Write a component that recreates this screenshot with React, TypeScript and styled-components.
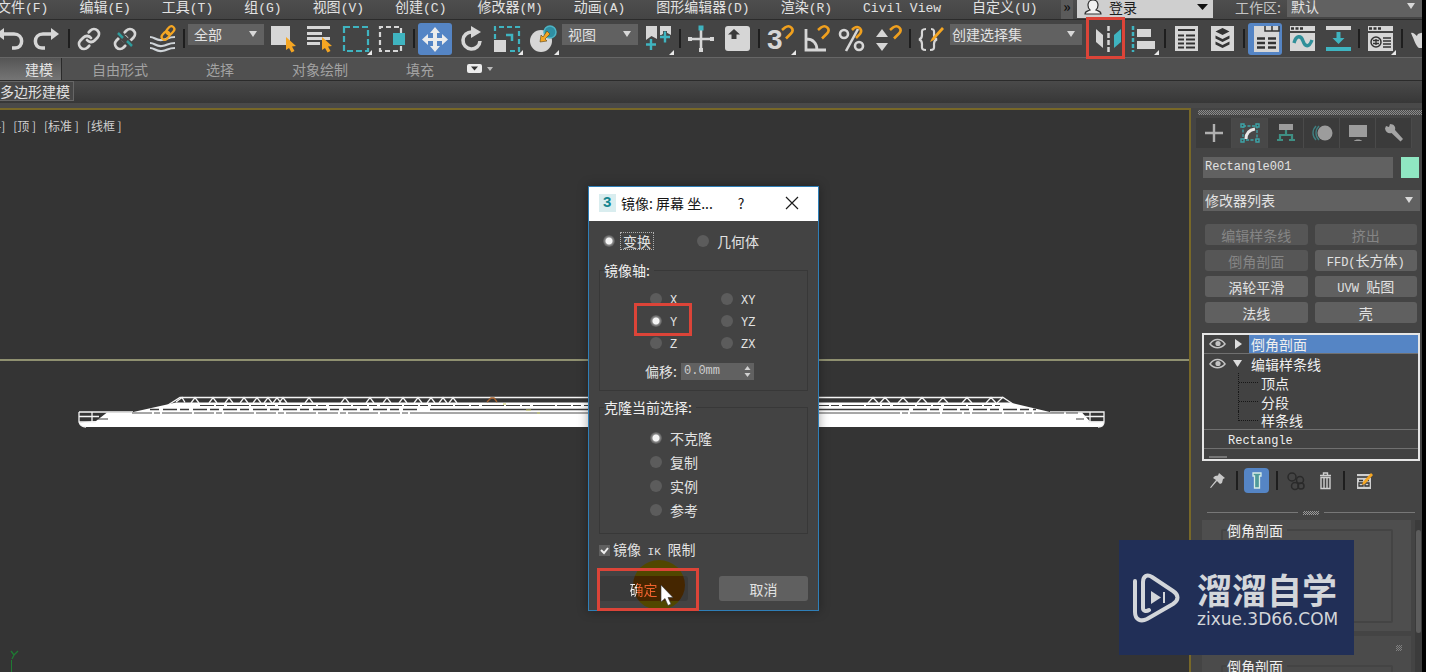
import React from "react";
import styled, { createGlobalStyle, css } from "styled-components";

const CJK = '"Noto Sans CJK SC", sans-serif';
const C = {
  panel: "#444444",
  field: "#616161",
  line: "#2b2b2b",
  text: "#e2e2e2",
  icon: "#d6d6d6",
  teal: "#3fb4c0",
  blue: "#5585c5",
  gold: "#f5a623",
  olive: "#786828",
  red: "#dc4438",
};

const GlobalStyle = createGlobalStyle`
  * { box-sizing: border-box; }
  html, body { margin: 0; background: #fff; }
  body { font: 14px/16px ${CJK}; color: ${C.text}; overflow: hidden; }
  button, input, select { font: inherit; color: inherit; margin: 0; }
`;

/* ---------- text ---------- */
const Latin = styled.span<{ $size: number }>`
  font-family: "Liberation Mono", monospace;
  font-size: ${(p) => p.$size}px;
`;

function Mixed({ children, size = 12 }: { children: string; size?: number }) {
  return (
    <>
      {children.split(/([\x20-\x7e]+)/).map((part, i) =>
        i % 2 ? (
          <Latin key={i} $size={size}>
            {part}
          </Latin>
        ) : (
          part
        )
      )}
    </>
  );
}

/* ---------- frame ---------- */
const Page = styled.div`
  padding-right: 7px;
  background: #fff;
`;
const AppWindow = styled.div`
  position: relative;
  display: flex;
  flex-direction: column;
  height: 100vh;
  overflow: hidden;
  background: ${C.panel};
  border-right: 4px solid #000;
`;

/* ---------- menu bar ---------- */
const MenuBar = styled.header`
  flex: none;
  display: flex;
  height: 20px;
  background: linear-gradient(#4e4e4e, #444);
  border-bottom: 1px solid ${C.line};
`;
const Menus = styled.nav`
  display: flex;
  flex: 1;
  gap: 31px;
  margin-left: -3px;
`;
const MenuButton = styled.button`
  flex: none;
  height: 12px;
  padding: 0;
  border: 0;
  background: none;
  line-height: 12px;
  white-space: pre;
`;
const MoreButton = styled.button`
  width: 12px;
  margin-right: 4px;
  padding: 0 0 8px;
  border: 0;
  background: #5b5b5b;
  color: #111;
  font-weight: 700;
  line-height: 12px;
`;
const UserBox = styled.button`
  display: flex;
  align-items: flex-start;
  width: 136px;
  height: 18px;
  padding: 0 5px 0 6px;
  border: 0;
  background: #cfcfcf;
  color: #1c1c1c;
  line-height: 14px;
  gap: 6px;
`;
const UserName = styled.span`
  flex: 1;
  text-align: left;
`;
const WorkspaceLabel = styled.label`
  width: 74px;
  padding-left: 22px;
  line-height: 14px;
  color: #c4c4c4;
`;
const WorkspaceSlot = styled.div`
  margin-top: -4px;
`;

/* ---------- drop-downs ---------- */
const SelectShell = styled.span<{ $w?: number }>`
  position: relative;
  display: block;
  flex: none;
  width: ${(p) => (p.$w ? p.$w + "px" : "100%")};
  height: 21px;
  background: ${C.field};
  &::after {
    content: "";
    position: absolute;
    right: 7px;
    top: calc(50% - 4px);
    border: 4px solid transparent;
    border-top: 6px solid #d8d8d8;
    border-bottom: 0;
    pointer-events: none;
  }
`;
const SelectControl = styled.select<{ $pad: number }>`
  appearance: none;
  display: block;
  width: 100%;
  height: 100%;
  padding: 0 18px 1px ${(p) => p.$pad}px;
  border: 0;
  border-radius: 0;
  background: none;
  outline: none;
`;
const ToolSelectSlot = styled.div`
  align-self: flex-start;
  margin: 4px 2px 0 1px;
`;

function Dropdown(p: { label: string; value: string; w?: number; pad?: number; id?: string }) {
  return (
    <SelectShell $w={p.w}>
      <SelectControl id={p.id} aria-label={p.label} $pad={p.pad ?? 2}>
        <option>{p.value}</option>
      </SelectControl>
    </SelectShell>
  );
}

/* ---------- main toolbar ---------- */
const Toolbar = styled.div`
  flex: none;
  display: flex;
  align-items: center;
  height: 37px;
  margin-left: -7px;
  overflow: visible;
`;
const ToolButton = styled.button<{ $active?: boolean; $wide?: boolean }>`
  position: relative;
  flex: none;
  width: 36px;
  height: 36px;
  margin-left: ${(p) => (p.$wide ? 5 : 0)}px;
  padding: 0;
  border: 0;
  background: none;
  ${(p) =>
    p.$active &&
    css`
      &::before {
        content: "";
        position: absolute;
        inset: 2px 1px;
        border-radius: 3px;
        background: ${C.blue};
      }
    `}
`;
const ToolSvg = styled.svg`
  position: relative;
  display: block;
  width: 36px;
  height: 36px;
  overflow: visible;
`;
const Divider = styled.span<{ $h?: number }>`
  flex: none;
  width: 7px;
  height: ${(p) => p.$h ?? 19}px;
  background: linear-gradient(#1e1e1e, #1e1e1e) center / 2px 100% no-repeat;
`;
const Highlight = styled.span<{ $inset: string }>`
  position: absolute;
  inset: ${(p) => p.$inset};
  border: 3px solid ${C.red};
  pointer-events: none;
  z-index: 3;
`;

const Corner = () => <path d="M34 29v5h-5z" fill="#e8e8e8" />;
const Chain = () => (
  <g fill="none" stroke={C.icon} strokeWidth="2.8" strokeLinecap="round">
    <path d="M10 13a5 5 0 0 0 7.54.54l3-3a5 5 0 0 0-7.07-7.07l-1.72 1.71" />
    <path d="M14 11a5 5 0 0 0-7.54-.54l-3 3a5 5 0 0 0 7.07 7.07l1.71-1.71" />
  </g>
);
const Pointer = () => (
  <path d="M20 16l10 9-4 .5 2.500 4.500-3 1.500-2.500-4.500-3 2z" fill={C.gold} />
);
const Magnet = () => (
  <path
    d="M20 9l3-2.500c5-3.500 10 2 6 6l-5 5"
    fill="none"
    stroke="#f0a01e"
    strokeWidth="2.600"
  />
);

const icons: Record<string, React.ReactNode> = {
  undo: (
    <>
      <path d="M8 13H21C31 13 31 27 22 27H19" fill="none" stroke={C.icon} strokeWidth="3.500" />
      <path d="M3 13l8-6v12z" fill={C.icon} />
    </>
  ),
  redo: (
    <>
      <path d="M24 13H14C4 13 4 27 13 27H16" fill="none" stroke={C.icon} strokeWidth="3.500" />
      <path d="M30 13l-8-6v12z" fill={C.icon} />
    </>
  ),
  link: (
    <g transform="translate(5 6)">
      <Chain />
    </g>
  ),
  unlink: (
    <g transform="translate(5 6)">
      <Chain />
      <path d="M3.500 4.500l17 16" stroke={C.panel} strokeWidth="6" />
      <path d="M5 6l5 5M14 14l5 5" stroke="#2f9c9c" strokeWidth="2.500" />
    </g>
  ),
  bind: (
    <>
      <path
        d="M6 16c5 0 6 4 12 3s6-3 13-3M6 22c5 0 6 4 12 3s6-3 13-3M6 27c5 0 6 4 12 3s6-3 13-3"
        fill="none"
        stroke="#cfd4d8"
        strokeWidth="2.200"
      />
      <g transform="rotate(-48 24 12)" fill="none" stroke={C.gold} strokeWidth="2.200">
        <rect x="16" y="9" width="9" height="6" rx="3" />
        <rect x="23" y="9" width="9" height="6" rx="3" />
      </g>
    </>
  ),
  selectObject: (
    <>
      <path d="M5 5h19v19H5z" fill={C.icon} />
      <Pointer />
    </>
  ),
  selectName: (
    <>
      <path d="M5 5h23v3H5zM5 11h15v3H5zM5 16h23v3H5zM5 21h13v3H5z" fill={C.icon} />
      <Pointer />
    </>
  ),
  region: (
    <>
      <rect x="6" y="6" width="24" height="24" fill="none" stroke={C.teal} strokeWidth="2.200" strokeDasharray="6 3" />
      <Corner />
    </>
  ),
  windowCross: (
    <>
      <path d="M27 12V6H6v24h21v-5" fill="none" stroke={C.icon} strokeWidth="2.200" strokeDasharray="5 3" />
      <path d="M19 12h12v12H19z" fill={C.teal} />
    </>
  ),
  move: (
    <path
      d="M18 6l5 6h-3v5h5v-4l6 5.500-6 5.500v-4h-5v5h3l-5 6-5-6h3v-5h-5v4L5 18.500 11 13v4h5v-5h-3z"
      fill="#ececec"
    />
  ),
  rotate: (
    <>
      <path d="M19 11a8.500 8.500 0 1 0 8 9" fill="none" stroke={C.icon} strokeWidth="3.600" />
      <path d="M18 5l10 6-10 6z" fill={C.icon} />
    </>
  ),
  scale: (
    <>
      <path d="M6 18V6h24v24H19" fill="none" stroke={C.teal} strokeWidth="2.200" strokeDasharray="5 3" />
      <path d="M5 19h12v12H5z" fill={C.icon} />
      <path d="M17 14h6v6" fill="none" stroke={C.teal} strokeWidth="2.500" />
      <Corner />
    </>
  ),
  place: (
    <>
      <circle cx="16" cy="20" r="11" fill={C.icon} />
      <circle cx="25" cy="11" r="6" fill="#2f8fa3" stroke="#4cb3c4" strokeWidth="1.500" />
      <path d="M22 10l3 3-5 5 2 2-7 1 1-7 2 2z" fill={C.gold} stroke="#59451a" strokeWidth=".6" />
      <Corner />
    </>
  ),
  pivot: (
    <>
      <path d="M6 5h11v13l-5.500-3L6 19z" fill={C.icon} />
      <path d="M20 5h11v9l-5.500-3L20 15z" fill={C.icon} />
      <path d="M11 17v12M5 23h12M25 10v12M19 16h12" stroke={C.panel} strokeWidth="4" />
      <path d="M11 18v11M6 23.500h10M25 10.500v11M20 16h10" stroke={C.teal} strokeWidth="2.400" />
      <Corner />
    </>
  ),
  manipulate: (
    <>
      <path d="M18 6v24M6 18h24" stroke={C.icon} strokeWidth="2.600" />
      <path d="M5 16h4v4H5zM27 16h4v4h-4zM16 27h4v4h-4z" fill={C.icon} />
      <path d="M15.500 4.500h5v5h-5z" fill={C.teal} />
    </>
  ),
  keyboard: (
    <>
      <rect x="6" y="5" width="25" height="25" rx="3" fill={C.icon} />
      <path d="M15 8l6 5.500h-3.500V18h-5v-4.500H9z" fill="#3c3c3c" />
    </>
  ),
  snap: (
    <>
      <text x="5" y="28" fontFamily="Liberation Sans" fontWeight="700" fontSize="28" fill={C.icon}>
        3
      </text>
      <Magnet />
      <Corner />
    </>
  ),
  angle: (
    <>
      <path d="M8 8v21h20M8 18c7 0 11 4 11 11" fill="none" stroke={C.icon} strokeWidth="2.800" />
      <Magnet />
    </>
  ),
  percent: (
    <>
      <g fill="none" stroke={C.icon} strokeWidth="2.600">
        <circle cx="10" cy="13" r="4" />
        <circle cx="25" cy="25" r="4" />
        <path d="M24 8L12 30" />
      </g>
      <path d="M18 9l2-2c5-3 9 2 6 6l-4 4" fill="none" stroke="#f0a01e" strokeWidth="2.600" />
    </>
  ),
  spinner: (
    <>
      <path d="M12 8l6 8H6zM12 30l6-8H6z" fill={C.icon} />
      <Magnet />
    </>
  ),
  editSet: (
    <>
      <path
        d="M13 8c-5 0-4 2-4 6 0 3-1 4-3 4.500 2 .5 3 1.500 3 4.500 0 4-1 6 4 6M18 8c4 0 3 3 3 6 0 3 1 4 3 4.500-2 .5-3 1.500-3 4.500 0 4 1 6-4 6"
        fill="none"
        stroke={C.icon}
        strokeWidth="2.200"
      />
      <path d="M29 6l2 2-10 11-4 2 2-4z" fill={C.gold} />
    </>
  ),
  mirror: (
    <>
      <path d="M7 8l7 6v13l-7-6z" fill={C.icon} />
      <path d="M32 8l-7 6v13l7-6z" fill={C.teal} />
      <path d="M19.500 5v26" stroke={C.icon} strokeWidth="2.500" strokeDasharray="5 2" />
    </>
  ),
  align: (
    <>
      <path d="M8 5v26" stroke={C.teal} strokeWidth="2.500" strokeDasharray="4 2" />
      <path d="M12 8h14v8H12zM12 20h18v8H12z" fill={C.icon} />
      <Corner />
    </>
  ),
  layers: (
    <>
      <path d="M7 5h23v25H7z" fill={C.icon} />
      <path d="M10 9h17M10 14.500h6M18 14.500h9M10 18.500h6M18 18.500h9M10 22.500h6M18 22.500h9M10 26.500h6M18 26.500h9" stroke="#333" strokeWidth="2" />
    </>
  ),
  layerExplorer: (
    <>
      <path d="M7 5h23v25H7z" fill={C.icon} />
      <path d="M18.500 7l7 3.500-7 3.500-7-3.500zM11.500 14.500l7 3.500 7-3.500v3l-7 3.500-7-3.500zM11.500 20.500l7 3.500 7-3.500v3l-7 3.500-7-3.500z" fill="#333" />
    </>
  ),
  ribbon: (
    <>
      <rect x="7" y="5" width="25" height="26" fill={C.icon} />
      <path d="M18 5v5h14V5M25 5v5" fill="none" stroke="#333" strokeWidth="1.500" />
      <path d="M10 17.500h8M21 17.500h8M10 22h8M21 22h8M10 26.500h8M21 26.500h8" stroke="#333" strokeWidth="2.400" />
    </>
  ),
  curve: (
    <>
      <path d="M7 5h25v5H7zM7 12h25v18H7z" fill={C.icon} />
      <path d="M8 7.500h12" stroke="#333" strokeWidth="2.500" strokeDasharray="3 1.500" />
      <path d="M11 22c2-8 7-8 9-2s6 7 9-1" fill="none" stroke="#2f8f99" strokeWidth="3.400" />
    </>
  ),
  schematic: (
    <>
      <path d="M7 5h25v4H7z" fill={C.icon} />
      <path d="M7 26h25v4H7zM17.500 11h4v6h4l-6 6-6-6h4z" fill={C.teal} />
    </>
  ),
  material: (
    <>
      <path d="M6 5h25v5H6zM6 12h25v18H6z" fill={C.icon} />
      <path d="M7 7.500h12" stroke="#333" strokeWidth="2.500" strokeDasharray="3 1.500" />
      <circle cx="14" cy="21" r="5" fill="none" stroke="#333" strokeWidth="1.500" />
      <path d="M11 19.500h6M11 22.500h6M14 18v6M21 17h8M21 20h8M21 23h8M21 26h8" stroke="#333" strokeWidth="1.300" />
      <Corner />
    </>
  ),
  teapot: <path d="M6 12c3-1 4 2 6 3 0-3 8-5 14-1v13H14c-3-2-4-6-8-15z" fill={C.icon} />,
};

type Tool = { name: string; label: string; active?: boolean; wide?: boolean; marked?: boolean };
type Entry = Tool | "|" | { select: string; label: string; w: number };

const toolbar: Entry[] = [
  { name: "undo", label: "撤消" },
  { name: "redo", label: "重做" },
  "|",
  { name: "link", label: "链接" },
  { name: "unlink", label: "取消链接" },
  { name: "bind", label: "绑定到空间扭曲" },
  "|",
  { select: "全部", label: "选择过滤器", w: 76 },
  { name: "selectObject", label: "选择对象" },
  { name: "selectName", label: "按名称选择" },
  { name: "region", label: "矩形选择区域" },
  { name: "windowCross", label: "窗口/交叉" },
  "|",
  { name: "move", label: "选择并移动", active: true },
  { name: "rotate", label: "选择并旋转" },
  { name: "scale", label: "选择并缩放" },
  { name: "place", label: "选择并放置" },
  { select: "视图", label: "参考坐标系", w: 76 },
  { name: "pivot", label: "使用轴点中心" },
  "|",
  { name: "manipulate", label: "选择并操纵" },
  { name: "keyboard", label: "键盘快捷键覆盖" },
  "|",
  { name: "snap", label: "捕捉开关" },
  { name: "angle", label: "角度捕捉" },
  { name: "percent", label: "百分比捕捉" },
  { name: "spinner", label: "微调器捕捉" },
  "|",
  { name: "editSet", label: "编辑命名选择集" },
  { select: "创建选择集", label: "命名选择集", w: 132 },
  { name: "mirror", label: "镜像", wide: true, marked: true },
  { name: "align", label: "对齐" },
  "|",
  { name: "layers", label: "场景资源管理器" },
  { name: "layerExplorer", label: "层资源管理器" },
  "|",
  { name: "ribbon", label: "功能区", active: true },
  { name: "curve", label: "曲线编辑器" },
  { name: "schematic", label: "图解视图" },
  "|",
  { name: "material", label: "材质编辑器" },
  "|",
  { name: "teapot", label: "渲染设置" },
];

/* ---------- ribbon ---------- */
const RibbonTabs = styled.div`
  flex: none;
  display: flex;
  height: 24px;
  background: #505050;
  border-top: 1px solid #666;
  border-bottom: 1px solid ${C.line};
`;
const RibbonTab = styled.button<{ $active?: boolean }>`
  flex: none;
  padding: 0 29px;
  border: 0;
  background: none;
  color: #a2a2a2;
  line-height: 22px;
  ${(p) =>
    p.$active &&
    css`
      margin-right: 1px;
      padding: 0 8px 0 25px;
      border-right: 1px solid #2a2a2a;
      background: linear-gradient(#555, #757575);
      color: #e4e4e4;
    `}
`;
const RibbonToggle = styled.button`
  display: flex;
  align-items: center;
  gap: 8px;
  padding: 0 4px;
  border: 0;
  background: none;
`;
const RibbonPanel = styled.div`
  flex: none;
  height: 22px;
  background: linear-gradient(#4a4a4a, #373737);
`;
const RibbonPanelButton = styled.button`
  display: block;
  height: 20px;
  padding: 0 3px 0 0;
  border: 1px solid #666;
  border-left: 0;
  background: #474747;
  line-height: 18px;
`;

/* ---------- work area ---------- */
const WorkArea = styled.main`
  flex: 1;
  min-height: 0;
  display: grid;
  grid-template-columns: 1fr 231px;
  padding-top: 5px;
  background: #494949;
`;
const Viewport = styled.section`
  position: relative;
  overflow: hidden;
  min-width: 0;
  background: #343434;
  border-top: 2px solid ${C.olive};
  border-right: 2px solid ${C.olive};
`;
const ViewLabels = styled.div`
  position: relative;
  display: flex;
  gap: 8px;
  margin-top: 8px;
  font-size: 12px;
  color: #cfcfcf;
`;
const ViewLabel = styled.button`
  padding: 0;
  border: 0;
  background: none;
  white-space: pre;
  &:first-child { margin-left: -3px; }
`;
const Scene = styled.svg`
  position: absolute;
  left: 0;
  top: 0;
  width: 1189px;
  height: 562px;
`;
const Horizon = styled.div`
  position: absolute;
  left: 0;
  right: 0;
  top: 249px;
  height: 2px;
  background: #8f9070;
`;

const tri = (x: number, w = 5) => `M${x - w} 403L${x} 397.500L${x + w} 403`;
const trussL = [195, 213, 229, 244, 257, 268, 277, 283, 309, 345, 370, 387, 403, 418, 431, 443, 453];
const trussR = [873, 885, 903, 922, 943, 967, 991];

function Ship() {
  return (
    <Scene viewBox="0 110 1189 562" aria-hidden="true">
      <path d="M96 421l11-8.500h24l45-10H1010l42 10h30l8 9h14c0 3-2 5.500-5 5.500H86c-4 0-6-2-7-4.500z" fill="#fff" />
      <g fill="none" stroke="#f4f4f4" strokeWidth="1.300">
        <path d="M79 412h54M79 412v10c1 3 3 5 7 5M79 416.500h20M79 422h17M92 412v10M168 405l12-7.500H1003l10 6.500" />
        <path d="M1050 412h54v10c0 3-2 5-6 5M1090 412v10M1084 416.500h20M1088 422h16" />
        <path d={trussL.map((x) => tri(x, 4)).join("")} />
        <path d={trussR.map((x) => tri(x)).join("")} />
        <path d="M176 402l6-4.500 3 5M997 403l6-6" />
      </g>
      <g stroke="#3a3a3a" fill="none">
        <path d="M200 405.500H588M815 405.500H1000" strokeDasharray="14 2 8 3 22 2" strokeWidth="1.200" />
        <path d="M150 409.500H420M900 409.500H1036" strokeDasharray="9 4 14 3" strokeWidth="1.300" />
        <path d="M430 409.500H588M815 409.500H900" strokeWidth="1.300" />
        <path d="M132 413H430M880 413H1078" strokeDasharray="20 2 6 2 30 2" strokeWidth=".9" />
        <path d="M430 413H588M815 413H880" strokeWidth=".9" />
        <path d="M98 419h10M1076 419h8" />
      </g>
      <path d="M487 402l4-4h3l3 4" fill="none" stroke="#a5602c" strokeWidth="1.300" />
      <path d="M503 404h3M526 410h5M537 413h3" stroke="#c9cc62" strokeWidth="1.200" />
      <path d="M11.500 672V660" stroke="#1f7a33" />
      <path d="M11 651l3 4 4-4M14 655l-2 4" fill="none" stroke="#1f7a33" strokeWidth="1.300" />
    </Scene>
  );
}

/* ---------- command panel ---------- */
const Side = styled.aside`
  display: flex;
  flex-direction: column;
  min-height: 0;
  overflow: hidden;
  padding: 2px 2px 0 11px;
  background: ${C.panel};
`;
const Grip = styled.div`
  flex: none;
  height: 5px;
  margin: 0 -2px 3px -4px;
  background: repeating-conic-gradient(#8a8a8a 0 25%, #4a4a4a 0 50%) 0 0 / 2px 2px;
`;
const PanelTabs = styled.div`
  flex: none;
  display: flex;
  height: 30px;
  margin-left: -6px;
`;
const PanelTab = styled.button<{ $active?: boolean }>`
  width: 36px;
  padding: 0;
  border: 0;
  border-right: 1px solid #4a4a4a;
  background: ${(p) => (p.$active ? "#484848" : "#3b3b3b")};
`;
const TabSvg = styled.svg`
  display: block;
  width: 24px;
  height: 24px;
  margin: 0 auto;
`;
const NameRow = styled.div`
  flex: none;
  display: flex;
  gap: 8px;
  margin: 9px 1px 12px;
`;
const NameInput = styled.input`
  flex: 1;
  min-width: 0;
  height: 21px;
  padding: 0 2px 1px;
  border: 0;
  background: ${C.field};
  font: 12px "Liberation Mono", monospace;
`;
const Swatch = styled.button`
  width: 18px;
  height: 21px;
  border: 0;
  background: #8fe6c2;
`;
const SelectRow = styled.div`
  flex: none;
  margin-left: 1px;
`;
const ModifierGrid = styled.div`
  flex: none;
  display: grid;
  grid-template-columns: 1fr 1fr;
  gap: 5px 7px;
  margin: 13px 3px 10px;
`;
const PanelButton = styled.button`
  height: 21px;
  padding: 0;
  border: 0;
  border-radius: 3px;
  background: #606060;
  line-height: 20px;
  white-space: pre;
  &:disabled {
    background: #565656;
    color: #858585;
  }
`;
const Stack = styled.ul`
  flex: none;
  height: 128px;
  margin: 0;
  padding: 0;
  list-style: none;
  border: 2px solid #e6e6e6;
  background: #424242;
`;
const StackRow = styled.li<{ $ruled?: boolean; $indent?: number }>`
  display: flex;
  align-items: center;
  height: 19px;
  padding-left: ${(p) => p.$indent ?? 0}px;
  line-height: 18px;
  ${(p) => p.$ruled && "border-bottom: 1px solid #707070;"}
`;
const StackName = styled.span<{ $selected?: boolean }>`
  flex: 1;
  padding-left: 2px;
  color: #efefef;
  ${(p) => p.$selected && `background: ${C.blue};`}
`;
const StackGlyphs = styled.svg`
  flex: none;
  width: 45px;
  height: 18px;
`;
const StackStub = styled.li`
  width: 18px;
  height: 2px;
  margin: 7px 0 0 5px;
  background: #777;
`;
const Branch = styled.span<{ $last?: boolean }>`
  position: relative;
  width: 20px;
  height: 19px;
  margin-right: 1px;
  border-left: 1px dotted #161616;
  background: linear-gradient(90deg, #161616 50%, transparent 50%) 0 9px / 2px 1px repeat-x;
  ${(p) => p.$last && "height: 10px; align-self: flex-start; background-position: 0 9px;"}
`;
const StackTools = styled.div`
  flex: none;
  display: flex;
  align-items: center;
  height: 25px;
  margin: 7px 0 18px;
`;
const StackTool = styled.button<{ $w: number; $active?: boolean }>`
  width: ${(p) => p.$w}px;
  height: 25px;
  margin: 0 ${(p) => (p.$active ? 4 : 0)}px;
  padding: 0;
  border: 0;
  border-radius: 4px;
  background: ${(p) => (p.$active ? C.blue : "none")};
`;
const SmallSvg = styled.svg`
  display: block;
  width: 20px;
  height: 20px;
  margin: 0 auto;
`;
const Splitter = styled.div`
  flex: none;
  display: flex;
  align-items: center;
  gap: 5px;
  height: 3px;
  margin: 0 5px 6px;
  &::before, &::after { content: ""; flex: 1; height: 1px; background: #777; }
`;
const SplitterGrip = styled.span`
  width: 16px;
  height: 4px;
  background: repeating-conic-gradient(#999 0 25%, #444 0 50%) 0 0 / 2px 2px;
`;
const RolloutArea = styled.div`
  flex: 1;
  min-height: 0;
  display: flex;
  justify-content: space-between;
  margin-right: -2px;
`;
const Rollouts = styled.div`
  flex: 1;
  margin-right: 4px;
`;
const Rollout = styled.div`
  height: 111px;
  margin-bottom: 5px;
  padding: 2px 18px 8px 19px;
  background: #4e4e4e;
  & + & { padding-top: 4px; height: 140px; background: #4b4b4b; }
`;
const DragDots = styled.div`
  width: 6px;
  height: 6px;
  margin: 5px -9px 7px auto;
  background: repeating-conic-gradient(#808080 0 25%, #4b4b4b 0 50%) 0 0 / 2px 2px;
`;
const RolloutGroup = styled.fieldset`
  height: 100%;
  margin: 0;
  padding: 0 4px;
  border: 2px solid #444;
  border-radius: 2px;
`;
const ScrollTrack = styled.div`
  width: 7px;
  padding: 10px 1px 0;
  background: #3b3b3b;
`;
const ScrollThumb = styled.div`
  height: 103px;
  border-radius: 3px;
  background: #5c5c5c;
`;
const Legend = styled.legend`
  margin: 0;
  padding: 0 4px 0 0;
  height: 16px;
  line-height: 16px;
  color: #efefef;
`;

const tabIcons: { label: string; art: React.ReactNode }[] = [
  { label: "创建", art: <path d="M12 3v18M3 12h18" stroke="#b0b0b0" strokeWidth="2.400" /> },
  {
    label: "修改",
    art: (
      <>
        <path d="M5 5h14v14H5z" fill="none" stroke="#3ca4a8" strokeWidth="1.300" strokeDasharray="3 1.500" />
        <g fill="#444" stroke="#3ca4a8" strokeWidth="1.400">
          <path d="M3 3h3v3H3zM18 3h3v3h-3zM3 18h3v3H3zM18 18h3v3h-3z" />
        </g>
        <path d="M8 18c0-6 3-9 9-10" fill="none" stroke="#e8e8e8" strokeWidth="3" />
      </>
    ),
  },
  {
    label: "层次",
    art: (
      <>
        <path d="M5 3h14v6H5z" fill="#9c9c9c" />
        <path d="M12 9v5M6 19v-5h12v5M3 19h6M15 19h6" fill="none" stroke="#3f8f84" strokeWidth="2.200" />
      </>
    ),
  },
  {
    label: "运动",
    art: (
      <>
        <circle cx="15" cy="12" r="7.500" fill="#9c9c9c" />
        <path d="M6 5c-4 4-4 10 0 14M9 5c-4 4-4 10 0 14" fill="none" stroke="#3f7f80" strokeWidth="1.400" />
      </>
    ),
  },
  {
    label: "显示",
    art: <path d="M3 4h18v12H3zM8 20c1-2 7-2 8 0z" fill="#9c9c9c" />,
  },
  {
    label: "实用程序",
    art: (
      <path
        d="M4 5l3 1 1-3c4 0 6 3 5 6l8 9-2.500 2.500-9-8.500c-3 1-6-1-6.500-4.500z"
        fill="#a4a4a4"
      />
    ),
  },
];

function Eye({ open }: { open?: boolean }) {
  return (
    <StackGlyphs viewBox="0 0 45 18" aria-hidden="true">
      <path d="M6 9c4-6 11-6 15 0-4 5-11 5-15 0z" fill="none" stroke="#c4c4c4" strokeWidth="1.500" />
      <circle cx="14" cy="8.500" r="2.600" fill="#c4c4c4" />
      {open ? <path d="M29 5h9l-4.500 7z" fill="#ddd" /> : <path d="M31 4l7 5-7 5z" fill="#ddd" />}
    </StackGlyphs>
  );
}

/* ---------- mirror dialog ---------- */
const Dialog = styled.div`
  position: absolute;
  left: 588px;
  top: 186px;
  width: 231px;
  border: 1px solid #2f7fb8;
  background: #434343;
  box-shadow: 0 0 10px rgba(0, 0, 0, 0.35);
`;
const TitleBar = styled.div`
  display: flex;
  align-items: center;
  height: 34px;
  padding: 0 15px 2px 10px;
  background: #fff;
  color: #151515;
`;
const Title = styled.h1`
  flex: 1;
  margin: 0 0 0 5px;
  font-size: 14px;
  font-weight: 400;
  white-space: nowrap;
`;
const TitleButton = styled.button`
  width: 22px;
  height: 22px;
  margin-left: 15px;
  padding: 0;
  border: 0;
  background: none;
  & + & { margin-left: 29px; }
`;
const DialogBody = styled.form`
  padding: 10px 10px 9px;
`;
const ModeRow = styled.div`
  display: grid;
  grid-template-columns: 94px 1fr;
  padding-left: 4px;
`;
const Choice = styled.label<{ $h: number }>`
  position: relative;
  display: flex;
  align-items: center;
  gap: 5px;
  height: ${(p) => p.$h}px;
  white-space: pre;
`;
const ChoiceText = styled.span<{ $focus?: boolean }>`
  padding: 0 2px;
  border: 1px dotted ${(p) => (p.$focus ? "#b0b0b0" : "transparent")};
  line-height: 16px;
`;
const Radio = styled.input`
  appearance: none;
  flex: none;
  width: 12px;
  height: 12px;
  border-radius: 50%;
  background: #5c5c5c;
  &:checked {
    background: radial-gradient(circle, #f4f4f4 0 3px, #8a8a8a 4px, #565656 6px);
  }
`;
const Group = styled.fieldset<{ $top: number; $pad: number }>`
  margin: ${(p) => p.$top}px 0 0;
  padding: ${(p) => p.$pad}px 0 ${(p) => p.$pad}px 50px;
  border: 1px solid #383838;
  & > legend { margin-left: -46px; }
`;
const AxisGrid = styled.div`
  display: grid;
  grid-template-columns: 71px 1fr;
`;
const OffsetRow = styled.div`
  display: flex;
  align-items: center;
  height: 18px;
  margin: 8px 0 0 -5px;
`;
const OffsetLabel = styled.label`
  width: 36px;
`;
const Spinner = styled.span`
  display: flex;
  align-items: center;
  width: 73px;
  height: 17px;
  padding-right: 2px;
  background: ${C.field};
`;
const SpinnerInput = styled.input`
  flex: 1;
  min-width: 0;
  height: 17px;
  padding: 0 3px;
  border: 0;
  background: none;
  color: #cdcdcd;
  font: 12px "Liberation Mono", monospace;
`;
const CheckRow = styled.label`
  display: flex;
  align-items: center;
  gap: 3px;
  height: 18px;
  margin-top: 7px;
  white-space: pre;
`;
const Check = styled.input`
  appearance: none;
  flex: none;
  width: 11px;
  height: 11px;
  background: #606060;
`;
const CheckSlot = styled.span`
  position: relative;
  display: flex;
`;
const Tick = styled.svg`
  position: absolute;
  inset: 0;
  width: 11px;
  height: 11px;
`;
const Actions = styled.div`
  display: flex;
  justify-content: space-between;
  margin-top: 17px;
`;
const OkSlot = styled.div`
  position: relative;
`;
const DialogButton = styled.button<{ $pressed?: boolean }>`
  display: block;
  width: 89px;
  height: 25px;
  padding: 0;
  border: 0;
  border-radius: 3px;
  background: ${(p) => (p.$pressed ? "#3a3a3a" : "#606060")};
`;
const OkText = styled.span`
  position: relative;
  z-index: 2;
  background: linear-gradient(90deg, #eee 7px, #f0622c 7px);
  background-clip: text;
  color: transparent;
`;
const ClickHalo = styled.span`
  position: absolute;
  left: 34px;
  top: -16px;
  width: 52px;
  height: 50px;
  border-radius: 50%;
  background: linear-gradient(#514700 16px, #452600 16px 41px, #514700 41px);
`;
const Cursor = styled.svg`
  position: absolute;
  left: 60px;
  top: 8px;
  width: 15px;
  height: 24px;
  z-index: 4;
`;

function Axis({ name, checked }: { name: string; checked?: boolean }) {
  return (
    <Choice $h={22}>
      <Radio type="radio" name="axis" defaultChecked={checked} />
      <ChoiceText>
        <Mixed>{name}</Mixed>
      </ChoiceText>
      {checked && <Highlight $inset="-7px 29px -4px -16px" />}
    </Choice>
  );
}

function MirrorDialog() {
  return (
    <Dialog role="dialog" aria-label="镜像">
      <TitleBar>
        <svg width="17" height="20" viewBox="0 0 17 20" aria-hidden="true">
          <path d="M0 1h17v18H0z" fill="#d9edef" />
          <text x="4" y="14" fontFamily="Liberation Sans" fontWeight="700" fontSize="15" fill="#14858f">
            3
          </text>
        </svg>
        <Title>镜像: 屏幕 坐...</Title>
        <TitleButton aria-label="帮助">?</TitleButton>
        <TitleButton aria-label="关闭">
          <svg width="22" height="22" viewBox="0 0 22 22">
            <path d="M5 5l12 12M17 5L5 17" stroke="#1c1c1c" strokeWidth="1.200" />
          </svg>
        </TitleButton>
      </TitleBar>
      <DialogBody onSubmit={(e) => e.preventDefault()}>
        <ModeRow>
          <Choice $h={20}>
            <Radio type="radio" name="mode" defaultChecked />
            <ChoiceText $focus>变换</ChoiceText>
          </Choice>
          <Choice $h={20}>
            <Radio type="radio" name="mode" />
            <ChoiceText>几何体</ChoiceText>
          </Choice>
        </ModeRow>
        <Group $top={11} $pad={10}>
          <Legend>镜像轴:</Legend>
          <AxisGrid>
            <Axis name="X" />
            <Axis name="XY" />
            <Axis name="Y" checked />
            <Axis name="YZ" />
            <Axis name="Z" />
            <Axis name="ZX" />
          </AxisGrid>
          <OffsetRow>
            <OffsetLabel htmlFor="offset">偏移:</OffsetLabel>
            <Spinner>
              <SpinnerInput id="offset" defaultValue="0.0mm" />
              <svg width="9" height="13" viewBox="0 0 9 13" aria-hidden="true">
                <path d="M4.500 1l3 4h-6zM4.500 12l3-4h-6z" fill="#d0d0d0" />
              </svg>
            </Spinner>
          </OffsetRow>
        </Group>
        <Group $top={8} $pad={11}>
          <Legend>克隆当前选择:</Legend>
          {["不克隆", "复制", "实例", "参考"].map((name, i) => (
            <Choice key={name} $h={24}>
              <Radio type="radio" name="clone" defaultChecked={i === 0} />
              <ChoiceText>{name}</ChoiceText>
            </Choice>
          ))}
        </Group>
        <CheckRow>
          <CheckSlot>
            <Check type="checkbox" defaultChecked />
            <Tick viewBox="0 0 11 11" aria-hidden="true">
              <path d="M2 5l3 3 4-5" fill="none" stroke="#f0f0f0" strokeWidth="2" />
            </Tick>
          </CheckSlot>
          <span>
            <Mixed size={11}>镜像 IK 限制</Mixed>
          </span>
        </CheckRow>
        <Actions>
          <OkSlot>
            <DialogButton type="submit" $pressed>
              <ClickHalo />
              <OkText>确定</OkText>
            </DialogButton>
            <Highlight $inset="-8px -11px -10px -2px" />
            <Cursor viewBox="0 0 15 24" aria-hidden="true">
              <path d="M2 1v17l4-3.500 3 7 3-1.500-3-6.500h5z" fill="#fff" stroke="#333" strokeWidth=".6" />
            </Cursor>
          </OkSlot>
          <DialogButton type="button">取消</DialogButton>
        </Actions>
      </DialogBody>
    </Dialog>
  );
}

/* ---------- site badge ---------- */
const Badge = styled.div`
  position: absolute;
  right: 68px;
  bottom: 17px;
  display: flex;
  align-items: center;
  gap: 16px;
  width: 235px;
  height: 115px;
  padding-left: 13px;
  background: #212f57;
  color: #d3d6da;
`;
const BadgeName = styled.div`
  font-size: 35px;
  font-weight: 700;
  line-height: 42px;
  white-space: nowrap;
`;
const BadgeUrl = styled.div`
  font: 17px/18px "DejaVu Sans", sans-serif;
  white-space: nowrap;
`;

const menus = ["文件(F)", "编辑(E)", "工具(T)", "组(G)", "视图(V)", "创建(C)", "修改器(M)", "动画(A)", "图形编辑器(D)", "渲染(R)", "Civil View", "自定义(U)"];
const modifiers: [string, boolean][] = [
  ["编辑样条线", false],
  ["挤出", false],
  ["倒角剖面", false],
  ["FFD(长方体)", true],
  ["涡轮平滑", true],
  ["UVW 贴图", true],
  ["法线", true],
  ["壳", true],
];

export default function App() {
  return (
    <Page>
      <GlobalStyle />
      <AppWindow>
        <MenuBar>
          <Menus>
            {menus.map((m) => (
              <MenuButton key={m}>
                <Mixed size={13}>{m}</Mixed>
              </MenuButton>
            ))}
          </Menus>
          <MoreButton aria-label="更多菜单">»</MoreButton>
          <UserBox>
            <svg width="20" height="16" viewBox="0 0 20 16" aria-hidden="true">
              <path d="M2 14c0-3 3-3 5-4C4 7 4 0 10 0s6 7 3 10c2 1 5 1 5 4z" fill="#f2f2f2" stroke="#333" strokeWidth="1.200" />
            </svg>
            <UserName>登录</UserName>
            <svg width="11" height="14" viewBox="0 0 11 14" aria-hidden="true">
              <path d="M0 4h11l-5.500 6z" fill="#111" />
            </svg>
          </UserBox>
          <WorkspaceLabel htmlFor="workspace">工作区:</WorkspaceLabel>
          <WorkspaceSlot>
            <Dropdown id="workspace" label="工作区" value="默认" w={135} pad={4} />
          </WorkspaceSlot>
        </MenuBar>

        <Toolbar role="toolbar">
          {toolbar.map((t, i) => {
            if (t === "|") return <Divider key={i} />;
            if ("select" in t)
              return (
                <ToolSelectSlot key={i}>
                  <Dropdown label={t.label} value={t.select} w={t.w} pad={t.w > 100 ? 2 : 6} />
                </ToolSelectSlot>
              );
            return (
              <ToolButton key={i} aria-label={t.label} $active={t.active} $wide={t.wide}>
                <ToolSvg viewBox="0 0 36 36">{icons[t.name]}</ToolSvg>
                {t.marked && <Highlight $inset="-4px 0 -2px -3px" />}
              </ToolButton>
            );
          })}
        </Toolbar>

        <RibbonTabs>
          <RibbonTab $active>建模</RibbonTab>
          {["自由形式", "选择", "对象绘制", "填充"].map((t) => (
            <RibbonTab key={t}>{t}</RibbonTab>
          ))}
          <RibbonToggle aria-label="最小化功能区">
            <svg width="26" height="12" viewBox="0 0 26 12">
              <rect x="0" y="1" width="15" height="9" rx="2" fill="#ececec" />
              <path d="M4 3.500h7l-3.500 4z" fill="#333" />
              <path d="M20 4h6l-3 4z" fill="#bbb" />
            </svg>
          </RibbonToggle>
        </RibbonTabs>
        <RibbonPanel>
          <RibbonPanelButton>多边形建模</RibbonPanelButton>
        </RibbonPanel>

        <WorkArea>
          <Viewport>
            <Horizon />
            <Ship />
            <ViewLabels>
              {["-]", "[顶 ]", "[标准 ]", "[线框 ]"].map((t) => (
                <ViewLabel key={t}>{t}</ViewLabel>
              ))}
            </ViewLabels>
          </Viewport>

          <Side>
            <Grip />
            <PanelTabs>
              {tabIcons.map((t, i) => (
                <PanelTab key={t.label} aria-label={t.label} $active={i === 1}>
                  <TabSvg viewBox="0 0 24 24">{t.art}</TabSvg>
                </PanelTab>
              ))}
            </PanelTabs>
            <NameRow>
              <NameInput aria-label="对象名称" defaultValue="Rectangle001" />
              <Swatch aria-label="对象颜色" />
            </NameRow>
            <SelectRow>
              <Dropdown label="修改器列表" value="修改器列表" />
            </SelectRow>
            <ModifierGrid>
              {modifiers.map(([name, on]) => (
                <PanelButton key={name} disabled={!on}>
                  <Mixed>{name}</Mixed>
                </PanelButton>
              ))}
            </ModifierGrid>
            <Stack>
              <StackRow $ruled>
                <Eye />
                <StackName $selected>倒角剖面</StackName>
              </StackRow>
              <StackRow>
                <Eye open />
                <StackName>编辑样条线</StackName>
              </StackRow>
              {["顶点", "分段", "样条线"].map((n, i) => (
                <StackRow key={n} $indent={34} $ruled={i === 2}>
                  <Branch $last={i === 2} />
                  <StackName>{n}</StackName>
                </StackRow>
              ))}
              <StackRow $ruled $indent={22}>
                <StackName>
                  <Mixed>Rectangle</Mixed>
                </StackName>
              </StackRow>
              <StackStub aria-hidden="true" />
            </Stack>
            <StackTools>
              <StackTool $w={31} aria-label="锁定堆栈">
                <SmallSvg viewBox="0 0 20 20">
                  <path d="M11 2l6 5-2 1-1 4-2 1-3-3-6 7-1-.5L8 9 5 7l2-2 3-.5z" fill="#c8c8c8" />
                </SmallSvg>
              </StackTool>
              <Divider />
              <StackTool $w={25} $active aria-label="显示最终结果">
                <SmallSvg viewBox="0 0 20 20">
                  <path d="M6 2h8v3h-1.500v12h-5V5H6z" fill="#4f9a9a" stroke="#d7ece6" strokeWidth="1.300" />
                </SmallSvg>
              </StackTool>
              <Divider />
              <StackTool $w={32} aria-label="使唯一">
                <SmallSvg viewBox="0 0 20 20">
                  <g fill="none" stroke="#2a2a2a" strokeWidth="1.500">
                    <circle cx="6" cy="6" r="4" />
                    <circle cx="14" cy="9" r="3.500" />
                    <circle cx="9" cy="15" r="3.500" />
                    <circle cx="15" cy="15" r="3" />
                  </g>
                </SmallSvg>
              </StackTool>
              <StackTool $w={28} aria-label="移除修改器">
                <SmallSvg viewBox="0 0 20 20">
                  <path d="M4 4.500h11M7.500 4V2h4v2M5 6.500v11h9v-11zM8 7v10M11 7v10" fill="none" stroke="#cfcfcf" strokeWidth="1.400" />
                </SmallSvg>
              </StackTool>
              <Divider />
              <StackTool $w={34} aria-label="配置修改器集">
                <SmallSvg viewBox="0 0 20 20">
                  <path d="M3 3h14v15H3z" fill="#cfcfcf" />
                  <path d="M3 6h14M5 9.500h4M11 9.500h4M5 12h4v3H5zM11 12h4v3h-4z" fill="none" stroke="#333" strokeWidth="1.300" />
                  <path d="M17 2l2 2-8 9-3 1 1-3z" fill={C.gold} />
                </SmallSvg>
              </StackTool>
            </StackTools>
            <Splitter>
              <SplitterGrip />
            </Splitter>
            <RolloutArea>
              <Rollouts>
                {[0, 1].map((n) => (
                  <Rollout key={n}>
                    {n > 0 && <DragDots />}
                    <RolloutGroup>
                      <Legend>倒角剖面</Legend>
                    </RolloutGroup>
                  </Rollout>
                ))}
              </Rollouts>
              <ScrollTrack>
                <ScrollThumb />
              </ScrollTrack>
            </RolloutArea>
          </Side>
        </WorkArea>

        <MirrorDialog />

        <Badge>
          <svg width="49" height="50" viewBox="0 0 49 50" aria-hidden="true">
            <g fill="none" stroke="#d3d6da" strokeWidth="4" strokeLinecap="round" strokeLinejoin="round">
              <path d="M3 8v31c0 8 6 10 12 7l26-15c6-4 6-9 0-13L20 4c-5-3-9-1-9 5v26c0 3 3 4 6 2" />
            </g>
            <path d="M19 18l10 6.500-10 6.500z" fill="#d3d6da" />
            <path d="M32 19v11" stroke="#d3d6da" strokeWidth="2" />
          </svg>
          <div>
            <BadgeName>溜溜自学</BadgeName>
            <BadgeUrl>zixue.3D66.COM</BadgeUrl>
          </div>
        </Badge>
      </AppWindow>
    </Page>
  );
}
